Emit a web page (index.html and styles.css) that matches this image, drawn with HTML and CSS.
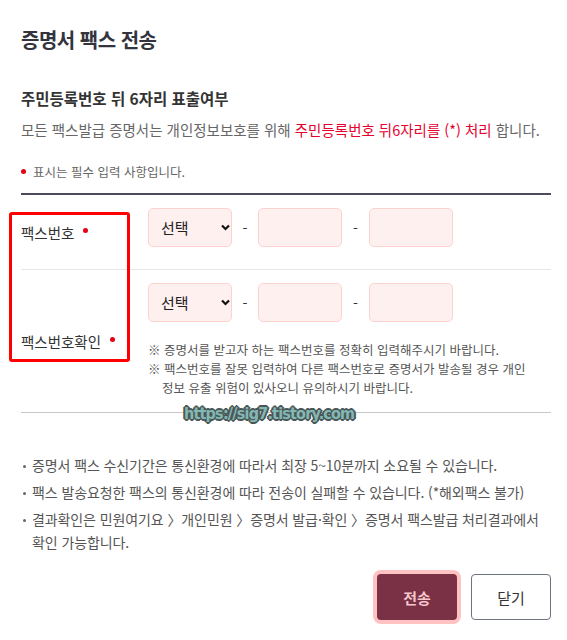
FILE: index.html
```html
<!DOCTYPE html>
<html lang="ko">
<head>
  <meta charset="UTF-8">
  <meta name="viewport" content="width=device-width, initial-scale=1.0">
  <title>증명서 팩스 전송</title>
  <link rel="stylesheet" href="styles.css">
</head>
<body>

  <div class="popup">
    <h1 class="popup-title">증명서 팩스 전송</h1>

    <h2 class="sub-title">주민등록번호 뒤 6자리 표출여부</h2>
    <p class="desc">모든 팩스발급 증명서는 개인정보보호를 위해 <span class="red">주민등록번호 뒤6자리를 (*) 처리</span> 합니다.</p>
    <p class="required"><span class="dot"></span>표시는 필수 입력 사항입니다.</p>

    <!-- fax form -->
    <div class="form">
      <div class="row">
        <div class="row-label">팩스번호<span class="dot"></span></div>
        <div class="row-body">
          <div class="fields">
            <div class="select">선택
              <svg width="9" height="7" viewBox="0 0 9 7"><path d="M1 1.5 L4.5 5 L8 1.5" fill="none" stroke="#111" stroke-width="2.2"/></svg>
            </div>
            <span class="dash">-</span>
            <div class="input"></div>
            <span class="dash">-</span>
            <div class="input"></div>
          </div>
        </div>
      </div>

      <div class="row row-last">
        <div class="row-label">팩스번호확인<span class="dot"></span></div>
        <div class="row-body row-body-notes">
          <div class="fields">
            <div class="select">선택
              <svg width="9" height="7" viewBox="0 0 9 7"><path d="M1 1.5 L4.5 5 L8 1.5" fill="none" stroke="#111" stroke-width="2.2"/></svg>
            </div>
            <span class="dash">-</span>
            <div class="input"></div>
            <span class="dash">-</span>
            <div class="input"></div>
          </div>
          <ul class="notes">
            <li>증명서를 받고자 하는 팩스번호를 정확히 입력해주시기 바랍니다.</li>
            <li>팩스번호를 잘못 입력하여 다른 팩스번호로 증명서가 발송될 경우 개인<br>정보 유출 위험이 있사오니 유의하시기 바랍니다.</li>
          </ul>
        </div>
      </div>
    </div>

    <ul class="info">
      <li>증명서 팩스 수신기간은 통신환경에 따라서 최장 5~10분까지 소요될 수 있습니다.</li>
      <li>팩스 발송요청한 팩스의 통신환경에 따라 전송이 실패할 수 있습니다. (*해외팩스 불가)</li>
      <li>결과확인은 민원여기요 〉개인민원 〉증명서 발급·확인 〉증명서 팩스발급 처리결과에서확인 가능합니다.</li>
    </ul>

    <div class="actions">
      <button class="btn btn-send">전송</button>
      <button class="btn btn-close">닫기</button>
    </div>

    <!-- annotation + watermark over the capture -->
    <div class="mark-box"></div>
    <div class="watermark">https://sig7.tistory.com</div>
  </div>

</body>
</html>
```

FILE: styles.css
```css
body {
  margin: 0;
  padding: 0;
  background: #fff;
  font-family: "Noto Sans CJK KR", "Noto Sans", sans-serif;
  color: #333;
}
.popup {
  position: relative;
  width: 530px;
  padding: 26px 16px 0 21px;
  height: 614px;
}
.popup-title {
  margin: 0;
  font-size: 20px;
  line-height: 28px;
  font-weight: bold;
  color: #33343d;
  letter-spacing: -0.5px;
}
.sub-title {
  margin: 33px 0 0;
  font-size: 15.5px;
  line-height: 22px;
  font-weight: bold;
  color: #333;
}
.desc {
  margin: 10px 0 0;
  font-size: 14.5px;
  line-height: 22px;
  color: #666;
}
.red {
  color: #e6002d;
}
.required {
  margin: 22px 0 0;
  font-size: 12.5px;
  line-height: 18px;
  color: #666;
  display: flex;
  align-items: center;
}
.required .dot {
  margin: 0 7px 2px 0;
}
.dot {
  display: inline-block;
  width: 5px;
  height: 5px;
  border-radius: 50%;
  background: #e60012;
}
.form {
  margin-top: 12px;
  border-top: 2px solid #4a4b5c;
}
.row {
  display: flex;
  border-bottom: 1px solid #e6e6e6;
}
.row-last {
  border-bottom-color: #c8c8c8;
}
.row-label {
  width: 127px;
  display: flex;
  align-items: center;
  font-size: 14.5px;
  color: #333;
}
.row-label .dot {
  margin: 0 0 4px 9px;
}
.row-body {
  padding: 13px 0 22px;
}
.row-body-notes {
  padding-bottom: 15px;
}
.fields {
  display: flex;
  align-items: center;
}
.select,
.input {
  box-sizing: border-box;
  width: 84px;
  height: 39px;
  background: #fff0f0;
  border: 1px solid #fdd3d0;
  border-radius: 5px;
}
.select {
  display: flex;
  align-items: center;
  justify-content: space-between;
  padding: 0 1px 0 12px;
  font-size: 15px;
  color: #222;
}
.dash {
  width: 26px;
  text-align: center;
  font-size: 14px;
  color: #333;
}
.dash + .input + .dash {
  width: 27px;
}
.notes {
  list-style: none;
  margin: 18px 0 0;
  padding: 0;
  font-size: 12.5px;
  line-height: 19px;
  color: #555;
}
.notes li {
  padding-left: 14px;
  text-indent: -14px;
}
.notes li::before {
  content: "※ ";
}
.info {
  list-style: none;
  margin: 41px 0 0;
  padding: 0;
  font-size: 14px;
  line-height: 23px;
  color: #555;
  letter-spacing: -0.1px;
}
.info li {
  position: relative;
  padding-left: 11px;
  margin-bottom: 4px;
}
.info li::before {
  content: "";
  position: absolute;
  left: 2px;
  top: 11px;
  width: 3px;
  height: 3px;
  border-radius: 50%;
  background: #666;
}
.actions {
  display: flex;
  justify-content: flex-end;
  gap: 14px;
  margin-top: 20px;
}
.btn {
  width: 80px;
  height: 46px;
  border-radius: 4px;
  font-family: inherit;
  font-size: 15px;
  cursor: pointer;
}
.btn-send {
  background: #7a3045;
  border: none;
  color: #f6c6cd;
  font-weight: bold;
  box-shadow: 0 0 0 4px #ffc2c2;
}
.btn-close {
  background: #fff;
  border: 1px solid #6e7382;
  color: #333;
}
.mark-box {
  position: absolute;
  left: 9px;
  top: 212px;
  width: 115px;
  height: 144px;
  border: 3px solid #ff0000;
  border-radius: 3px;
}
.watermark {
  position: absolute;
  left: 184px;
  top: 403px;
  font-family: "DejaVu Sans Condensed", "DejaVu Sans", sans-serif;
  font-weight: bold;
  font-stretch: condensed;
  font-size: 16px;
  line-height: 22px;
  color: #82b8b4;
  letter-spacing: -0.8px;
  text-shadow: -1px -1px 0 #4b5757, 1px -1px 0 #4b5757, -1px 1px 0 #4b5757, 1px 1px 0 #4b5757, 0 2px 0 #4b5757, 2px 0 0 #4b5757, -2px 0 0 #4b5757, 0 -2px 0 #4b5757;
}
```
